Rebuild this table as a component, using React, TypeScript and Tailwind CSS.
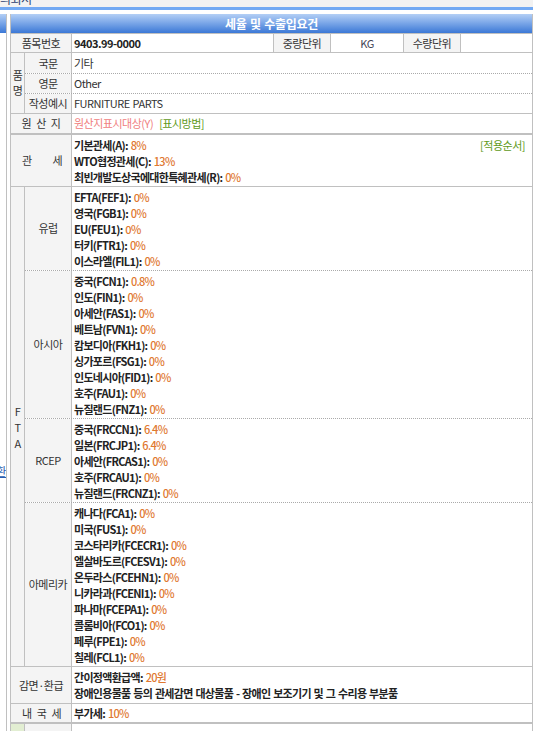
import React from "react";

type Rate = [string, string];

const europe: Rate[] = [
  ["EFTA(FEF1)", "0%"],
  ["영국(FGB1)", "0%"],
  ["EU(FEU1)", "0%"],
  ["터키(FTR1)", "0%"],
  ["이스라엘(FIL1)", "0%"],
];

const asia: Rate[] = [
  ["중국(FCN1)", "0.8%"],
  ["인도(FIN1)", "0%"],
  ["아세안(FAS1)", "0%"],
  ["베트남(FVN1)", "0%"],
  ["캄보디아(FKH1)", "0%"],
  ["싱가포르(FSG1)", "0%"],
  ["인도네시아(FID1)", "0%"],
  ["호주(FAU1)", "0%"],
  ["뉴질랜드(FNZ1)", "0%"],
];

const rcep: Rate[] = [
  ["중국(FRCCN1)", "6.4%"],
  ["일본(FRCJP1)", "6.4%"],
  ["아세안(FRCAS1)", "0%"],
  ["호주(FRCAU1)", "0%"],
  ["뉴질랜드(FRCNZ1)", "0%"],
];

const america: Rate[] = [
  ["캐나다(FCA1)", "0%"],
  ["미국(FUS1)", "0%"],
  ["코스타리카(FCECR1)", "0%"],
  ["엘살바도르(FCESV1)", "0%"],
  ["온두라스(FCEHN1)", "0%"],
  ["니카라과(FCENI1)", "0%"],
  ["파나마(FCEPA1)", "0%"],
  ["콜롬비아(FCO1)", "0%"],
  ["페루(FPE1)", "0%"],
  ["칠레(FCL1)", "0%"],
];

const ftaGroups = [
  { name: "유럽", rates: europe },
  { name: "아시아", rates: asia },
  { name: "RCEP", rates: rcep },
  { name: "아메리카", rates: america },
];

function RateLine({ label, value }: { label: string; value: string }) {
  return (
    <div className="leading-[16px] font-bold tracking-[-0.7px] text-[#222] whitespace-nowrap">
      {label}: <span className="font-medium text-[#e07830]">{value}</span>
    </div>
  );
}

export default function App() {
  return (
    <div className="min-h-[731px] bg-white text-[11px] tracking-[-0.5px] [word-spacing:1px] text-[#333] font-['Noto_Sans_CJK_KR',sans-serif]">
      {/* top strip (title scrolled off) */}
      <div className="w-[533px]">
        <div className="h-[7px] bg-[#f2f2f2] overflow-hidden">
          <div className="-mt-[10px] text-[12px] text-[#2b3f70] whitespace-nowrap">의뢰서</div>
        </div>
        <div className="h-[3px] bg-[#72a9f3]" />
      </div>

      <div className="flex mt-[4px]">
        {/* neighbour panel, mostly hidden */}
        <div className="w-[7px] border-r border-[#c0c0c0] flex flex-col">
          <div className="h-[19px] bg-gradient-to-b from-[#b3cff5] to-[#3b78d6]" />
          <div className="mt-[430px] flex justify-end overflow-hidden">
            <span className="text-[#2a5db0] underline whitespace-nowrap">관세환</span>
          </div>
        </div>

        {/* main table */}
        <div className="ml-[3px] w-[523px] border-x border-[#c0c0c0]">
          <div className="h-[19px] bg-gradient-to-b from-[#b3cff5] to-[#3b78d6] flex items-center justify-center text-white font-bold text-[12px] tracking-[-0.3px]">
            세율 및 수출입요건
          </div>

          {/* 품목번호 */}
          <div className="flex h-[19px] border-t border-[#c0c0c0]">
            <div className="w-[61px] shrink-0 bg-[#f4f4f4] border-r border-[#c0c0c0] flex items-center justify-center">품목번호</div>
            <div className="flex-1 flex items-center pl-[2px] font-bold text-[#222]">9403.99-0000</div>
            <div className="w-[57px] shrink-0 bg-[#f4f4f4] border-l border-[#c0c0c0] flex items-center justify-center">중량단위</div>
            <div className="w-[73px] shrink-0 border-l border-[#c0c0c0] flex items-center justify-center text-[#445]">KG</div>
            <div className="w-[57px] shrink-0 bg-[#f4f4f4] border-l border-[#c0c0c0] flex items-center justify-center">수량단위</div>
            <div className="w-[72px] shrink-0 border-l border-[#c0c0c0]" />
          </div>

          {/* 품명 */}
          <div className="flex border-t border-[#c0c0c0]">
            <div className="w-[14px] shrink-0 bg-[#f4f4f4] border-r border-[#c0c0c0] flex flex-col items-center justify-center leading-[15px]">
              <span>품</span>
              <span>명</span>
            </div>
            <div className="flex-1 flex flex-col">
              {[
                ["국문", "기타", "h-[20px]"],
                ["영문", "Other", "h-[20px] border-t border-dotted border-[#aaa]"],
                ["작성예시", "FURNITURE PARTS", "h-[20px] border-t border-dotted border-[#aaa]"],
              ].map(([k, v, cls]) => (
                <div key={k} className={`flex ${cls}`}>
                  <div className="w-[47px] shrink-0 bg-[#f4f4f4] border-r border-[#c0c0c0] flex items-center justify-center">{k}</div>
                  <div className="flex-1 flex items-center pl-[2px]">{v}</div>
                </div>
              ))}
            </div>
          </div>

          {/* 원산지 */}
          <div className="flex h-[20px] border-t border-[#c0c0c0]">
            <div className="w-[61px] shrink-0 bg-[#f4f4f4] border-r border-[#c0c0c0] flex items-center justify-center [word-spacing:3px]">원 산 지</div>
            <div className="flex-1 flex items-center pl-[2px] gap-[6px]">
              <span className="text-[#f08080]">원산지표시대상(Y)</span>
              <span className="text-[#5f9a1a]">[표시방법]</span>
            </div>
          </div>

          {/* 관세 */}
          <div className="flex border-t-2 border-[#c0c0c0]">
            <div className="w-[61px] shrink-0 bg-[#f4f4f4] border-r border-[#c0c0c0] flex items-center justify-between pl-[11px] pr-[9px]">
              <span>관</span>
              <span>세</span>
            </div>
            <div className="flex-1 flex justify-between items-start pl-[2px] pr-[7px] pt-[2px] pb-[1px]">
              <div>
                <RateLine label="기본관세(A)" value="8%" />
                <RateLine label="WTO협정관세(C)" value="13%" />
                <RateLine label="최빈개발도상국에대한특혜관세(R)" value="0%" />
              </div>
              <span className="leading-[16px] text-[#5f9a1a]">[적용순서]</span>
            </div>
          </div>

          {/* FTA */}
          <div className="flex border-t border-[#c0c0c0]">
            <div className="w-[14px] shrink-0 bg-[#f4f4f4] border-r border-[#c0c0c0] flex flex-col items-center justify-center leading-[16px]">
              <span>F</span>
              <span>T</span>
              <span>A</span>
            </div>
            <div className="flex-1 flex flex-col">
              {ftaGroups.map((g, i) => (
                <div key={g.name} className={`flex ${i > 0 ? "border-t border-dotted border-[#aaa]" : ""}`}>
                  <div className="w-[47px] shrink-0 bg-[#f4f4f4] border-r border-[#c0c0c0] flex items-center justify-center">{g.name}</div>
                  <div className="flex-1 pl-[2px] pt-[2px] pb-[1px]">
                    {g.rates.map(([l, v]) => (
                      <RateLine key={l} label={l} value={v} />
                    ))}
                  </div>
                </div>
              ))}
            </div>
          </div>

          {/* 감면·환급 */}
          <div className="flex border-t border-[#c0c0c0]">
            <div className="w-[61px] shrink-0 bg-[#f4f4f4] border-r border-[#c0c0c0] flex items-center justify-center">감면·환급</div>
            <div className="flex-1 pl-[2px] pt-[2px] pb-[2px]">
              <RateLine label="간이정액환급액" value="20원" />
              <div className="leading-[16px] font-bold tracking-[-0.7px] text-[#222] whitespace-nowrap">
                장애인용물품 등의 관세감면 대상물품 - 장애인 보조기기 및 그 수리용 부분품
              </div>
            </div>
          </div>

          {/* 내국세 */}
          <div className="flex h-[19px] border-t border-[#c0c0c0]">
            <div className="w-[61px] shrink-0 bg-[#f4f4f4] border-r border-[#c0c0c0] flex items-center justify-between pl-[11px] pr-[10px]">
              <span>내</span>
              <span>국</span>
              <span>세</span>
            </div>
            <div className="flex-1 flex items-center pl-[2px]">
              <RateLine label="부가세" value="10%" />
            </div>
          </div>

          {/* next section (cut off by the window) */}
          <div className="flex h-[24px] border-t-2 border-[#c0c0c0]">
            <div className="w-[14px] shrink-0 bg-[#e2eed2] border-r border-[#c0c0c0]" />
            <div className="w-[47px] shrink-0 bg-[#f4f4f4] border-r border-[#c0c0c0]" />
            <div className="flex-1" />
          </div>
        </div>
      </div>
    </div>
  );
}
